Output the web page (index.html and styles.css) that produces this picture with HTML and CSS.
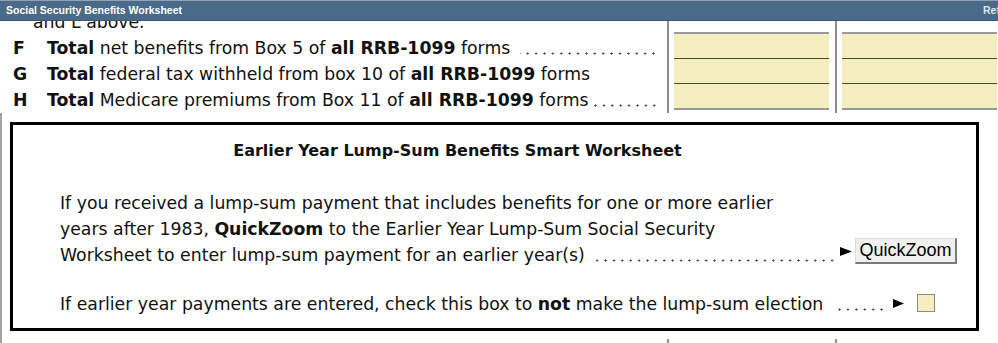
FILE: index.html
```html
<!DOCTYPE html>
<html lang="en">
<head>
    <meta charset="UTF-8">
    <title>Social Security Benefits Worksheet</title>
    <link rel="stylesheet" href="styles.css">
</head>
<body>
    <div class="titlebar">
        <span>Social Security Benefits Worksheet</span>
        <span class="ref">Ref</span>
    </div>

    <div class="sheet">
        <div class="upper">
            <div class="desc">
                <div class="line cont">and L above.</div>
                <div class="line">
                    <span class="key">F</span>
                    <span><b>Total</b> net benefits from Box 5 of <b>all RRB-1099</b> forms</span>
                    <span class="leader"></span>
                </div>
                <div class="line">
                    <span class="key">G</span>
                    <span><b>Total</b> federal tax withheld from box 10 of <b>all RRB-1099</b> forms</span>
                </div>
                <div class="line">
                    <span class="key">H</span>
                    <span><b>Total</b> Medicare premiums from Box 11 of <b>all RRB-1099</b> forms</span>
                    <span class="leader tight"></span>
                </div>
            </div>
            <div class="amt">
                <div class="cells">
                    <div class="cell"></div>
                    <div class="cell"></div>
                    <div class="cell"></div>
                </div>
            </div>
            <div class="amt last">
                <div class="cells">
                    <div class="cell"></div>
                    <div class="cell"></div>
                    <div class="cell"></div>
                </div>
            </div>
        </div>

        <div class="lower">
            <div class="box">
                <h2>Earlier Year Lump-Sum Benefits Smart Worksheet</h2>
                <div class="para">
                    <div>If you received a lump-sum payment that includes benefits for one or more earlier</div>
                    <div>years after 1983, <b>QuickZoom</b> to the Earlier Year Lump-Sum Social Security</div>
                    <div class="lead-line">
                        <span>Worksheet to enter lump-sum payment for an earlier year(s)</span>
                        <span class="leader"></span>
                        <svg class="arrow" width="12" height="9" viewBox="0 0 12 9"><polygon points="0,0 12,4.5 0,9" fill="#000"/></svg>
                        <button class="qz">QuickZoom</button>
                    </div>
                </div>
                <div class="para lead-line check-line">
                    <span>If earlier year payments are entered, check this box to <b>not</b> make the lump-sum election</span>
                    <span class="leader"></span>
                    <svg class="arrow" width="11" height="9" viewBox="0 0 11 9"><polygon points="0,0 11,4.5 0,9" fill="#000"/></svg>
                    <span class="check"></span>
                </div>
            </div>
            <div class="stub">
                <div class="desc"></div>
                <div class="amt"></div>
                <div class="amt last"></div>
            </div>
        </div>
    </div>
</body>
</html>
```

FILE: styles.css
```css
body {
    margin: 0;
    width: 998px;
    height: 343px;
    overflow: hidden;
    background-color: #fff;
    color: #111;
    font-family: "DejaVu Sans", Verdana, sans-serif;
}
/* title bar sits over the scrolled sheet */
.titlebar {
    position: relative;
    z-index: 1;
    display: flex;
    justify-content: space-between;
    height: 19px;
    padding-left: 6px;
    background-color: #4a6a8a;
    border-top: 1px solid #8ea1b5;
    border-bottom: 1px solid #3b5874;
    color: #fff;
    font: bold 10.5px/19px "Liberation Sans", Arial, sans-serif;
}
.ref {
    width: 15px;
    overflow: hidden;
    color: #dfe6ee;
}
.sheet {
    height: 322px;
    overflow: hidden;
}
.upper {
    display: flex;
    height: 106px;
    margin-top: -14px;
    font-size: 17.3px;
}
.desc {
    width: 667px;
}
.line {
    display: flex;
    height: 26px;
    line-height: 30px;
    white-space: nowrap;
}
.line.cont {
    padding-left: 33px;
}
.key {
    width: 34px;
    padding-left: 13px;
    font-weight: bold;
}
.leader {
    flex: 1;
    margin: 0 9px 0 10px;
    background: radial-gradient(circle, #333 0.8px, transparent 1.3px) right 0 top 19px / 8.4px 3px repeat-x;
}
.leader.tight {
    margin-left: 4px;
}
.amt {
    width: 155px;
    padding: 0 6px 0 5px;
    border-left: 2px solid #8c8c8c;
}
.amt.last {
    padding-right: 1px;
}
.cells {
    margin-top: 25px;
    border-top: 2px solid #999;
    border-bottom: 2px solid #999;
}
.cell {
    height: 24px;
    background-color: #f4edbf;
}
.cell + .cell {
    border-top: 1px solid #4b4838;
}
.lower {
    padding-top: 9px;
    border-left: 2px solid #a3a3a3;
}
.box {
    box-sizing: border-box;
    width: 969px;
    margin-left: 8px;
    padding: 16px 19px 11px 47px;
    border: 3px solid #000;
}
.box h2 {
    margin: 0 102px 29px 0;
    font-size: 16px;
    line-height: 20px;
    text-align: center;
}
.para {
    font-size: 17.3px;
    line-height: 26px;
    white-space: nowrap;
}
.lead-line {
    display: flex;
}
.lead-line .leader {
    margin: 0 4px 0 10px;
    background-position: right 0 top 17px;
}
.arrow {
    flex: none;
    margin: 5px 3px 0 0;
}
.qz {
    box-sizing: border-box;
    width: 102px;
    height: 26px;
    margin-top: -4px;
    padding: 0;
    background-color: #f0f0f0;
    border-style: solid;
    border-width: 1px 2px 2px 1px;
    border-color: #dcdcdc #7a7a7a #7a7a7a #dcdcdc;
    color: #000;
    font: 18px/23px "Liberation Sans", Arial, sans-serif;
}
.check-line {
    margin: 23px 22px 0 0;
}
.check-line .leader {
    margin-right: 7px;
}
.check-line .arrow {
    margin: 8px 13px 0 0;
}
.check {
    box-sizing: border-box;
    width: 18px;
    height: 18px;
    margin-top: 3px;
    background-color: #f4edbf;
    border: 1px solid #8a8a8a;
}
.stub {
    display: flex;
    height: 20px;
    margin-top: 8px;
}
.stub .desc {
    width: 665px;
}
```
